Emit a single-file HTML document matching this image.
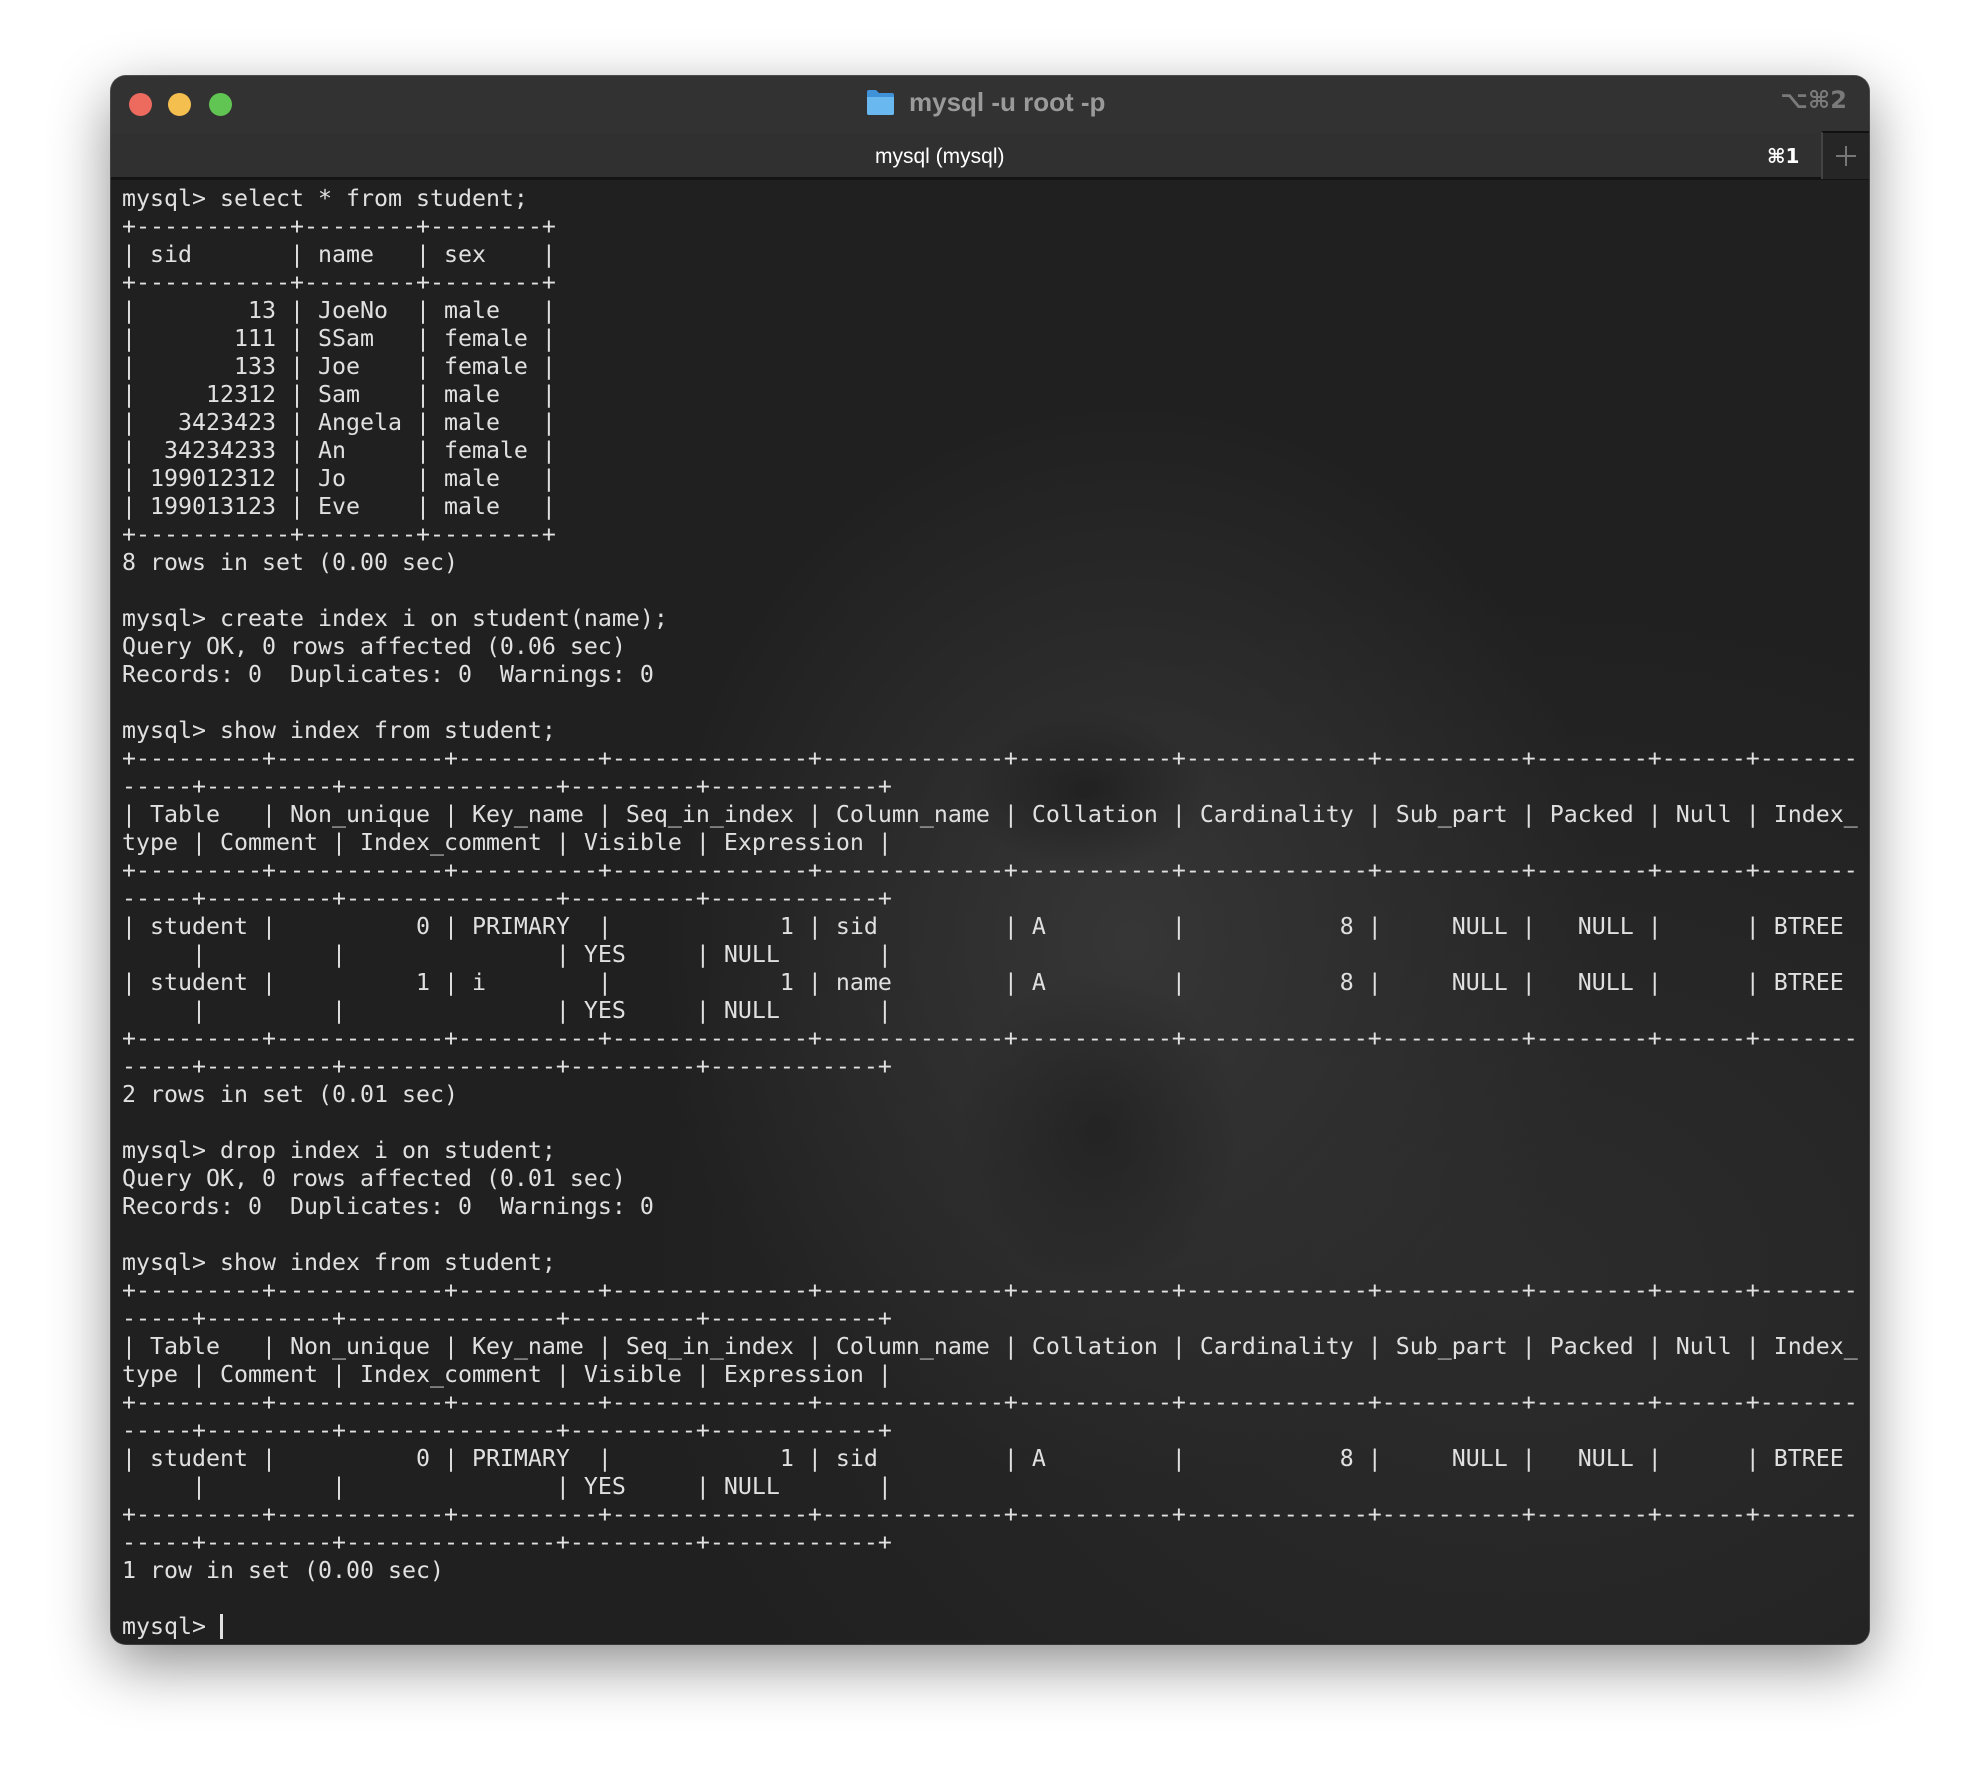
<!DOCTYPE html>
<html><head><meta charset="utf-8"><style>
html,body{margin:0;padding:0;width:1980px;height:1792px;background:#fff;overflow:hidden}
.win{position:absolute;left:111px;top:76px;width:1758px;height:1568px;border-radius:15px;overflow:hidden;background:#252525;box-shadow:0 20px 60px rgba(0,0,0,.45),0 0 0 1px #555;}
.title{position:absolute;left:0;top:0;width:100%;height:57px;background:#323232}
.tabbar{position:absolute;left:0;top:57px;width:100%;height:44px;background:#303030;border-bottom:3px solid #141414}
.dot{position:absolute;top:17px;width:23px;height:23px;border-radius:50%}
.t1{position:absolute;left:798px;top:11px;font:bold 26px "Liberation Sans",sans-serif;color:#9a9a9a;white-space:nowrap}
.k2{position:absolute;right:22px;top:10px;font:bold 24px "DejaVu Sans",sans-serif;color:#7a7a7a}
.tab{position:absolute;left:764px;top:12px;font:21px "Liberation Sans",sans-serif;color:#fff}
.k1{position:absolute;left:1656px;top:11px;font:bold 20px "DejaVu Sans",sans-serif;color:#fff}
.plus{position:absolute;right:0;top:-2px;width:46px;height:46px;background:#262626;border-left:2px solid #444;border-top:2px solid #111}
.term{position:absolute;left:0;top:104px;width:100%;height:1464px;
background:
radial-gradient(ellipse 120px 80px at 975px 610px,rgba(15,15,15,.45),transparent),
radial-gradient(ellipse 140px 160px at 988px 950px,rgba(20,20,20,.45),transparent),
radial-gradient(ellipse 560px 640px at 1020px 760px,#363636,rgba(40,40,40,0) 85%),
radial-gradient(ellipse 900px 700px at 1400px 1100px,#2c2c2c,transparent),
#202020}
pre{position:absolute;left:11px;top:5px;margin:0;font:23.25px/28px "DejaVu Sans Mono","Liberation Mono",monospace;color:#e0e0e0;white-space:pre}
</style></head><body>
<div class="win">
 <div class="title">
  <div class="dot" style="left:18px;background:#ed6a5e"></div>
  <div class="dot" style="left:57px;background:#f5bf4f"></div>
  <div class="dot" style="left:98px;background:#61c554"></div>
  <svg style="position:absolute;left:755px;top:13px" width="29" height="27" viewBox="0 0 29 27"><path d="M1 3 Q1 1 3 1 H10 L13 4 H26 Q28 4 28 6 V24 Q28 26 26 26 H3 Q1 26 1 24Z" fill="#3f92d8"/><path d="M1 8 H28 V24 Q28 26 26 26 H3 Q1 26 1 24Z" fill="#6ab8f0"/></svg>
  <div class="t1">mysql -u root -p</div>
  <div class="k2">⌥⌘2</div>
 </div>
 <div class="tabbar">
  <div class="tab">mysql (mysql)</div>
  <div class="k1">⌘1</div>
  <div class="plus"><svg width="46" height="46"><path d="M23 13V33M13 23H33" stroke="#777" stroke-width="2"/></svg></div>
 </div>
 <div class="term"><pre>mysql&gt; select * from student;
+-----------+--------+--------+
| sid       | name   | sex    |
+-----------+--------+--------+
|        13 | JoeNo  | male   |
|       111 | SSam   | female |
|       133 | Joe    | female |
|     12312 | Sam    | male   |
|   3423423 | Angela | male   |
|  34234233 | An     | female |
| 199012312 | Jo     | male   |
| 199013123 | Eve    | male   |
+-----------+--------+--------+
8 rows in set (0.00 sec)

mysql&gt; create index i on student(name);
Query OK, 0 rows affected (0.06 sec)
Records: 0  Duplicates: 0  Warnings: 0

mysql&gt; show index from student;
+---------+------------+----------+--------------+-------------+-----------+-------------+----------+--------+------+-------
-----+---------+---------------+---------+------------+
| Table   | Non_unique | Key_name | Seq_in_index | Column_name | Collation | Cardinality | Sub_part | Packed | Null | Index_
type | Comment | Index_comment | Visible | Expression |
+---------+------------+----------+--------------+-------------+-----------+-------------+----------+--------+------+-------
-----+---------+---------------+---------+------------+
| student |          0 | PRIMARY  |            1 | sid         | A         |           8 |     NULL |   NULL |      | BTREE 
     |         |               | YES     | NULL       |
| student |          1 | i        |            1 | name        | A         |           8 |     NULL |   NULL |      | BTREE 
     |         |               | YES     | NULL       |
+---------+------------+----------+--------------+-------------+-----------+-------------+----------+--------+------+-------
-----+---------+---------------+---------+------------+
2 rows in set (0.01 sec)

mysql&gt; drop index i on student;
Query OK, 0 rows affected (0.01 sec)
Records: 0  Duplicates: 0  Warnings: 0

mysql&gt; show index from student;
+---------+------------+----------+--------------+-------------+-----------+-------------+----------+--------+------+-------
-----+---------+---------------+---------+------------+
| Table   | Non_unique | Key_name | Seq_in_index | Column_name | Collation | Cardinality | Sub_part | Packed | Null | Index_
type | Comment | Index_comment | Visible | Expression |
+---------+------------+----------+--------------+-------------+-----------+-------------+----------+--------+------+-------
-----+---------+---------------+---------+------------+
| student |          0 | PRIMARY  |            1 | sid         | A         |           8 |     NULL |   NULL |      | BTREE 
     |         |               | YES     | NULL       |
+---------+------------+----------+--------------+-------------+-----------+-------------+----------+--------+------+-------
-----+---------+---------------+---------+------------+
1 row in set (0.00 sec)

mysql&gt; <span style="display:inline-block;width:3px;height:25px;background:#e0e0e0;vertical-align:-5px"></span></pre></div>
</div>
</body></html>
